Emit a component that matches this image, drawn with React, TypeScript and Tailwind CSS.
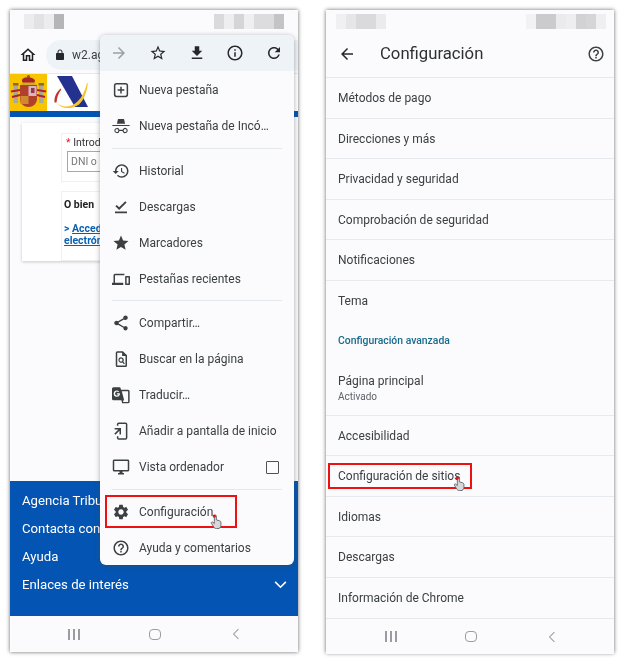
import type { ReactNode } from "react";

const textFont = "font-['Roboto',sans-serif]";

function MdIcon({ d, className = "w-[18px] h-[18px] shrink-0 text-[#3c4043]" }: { d: string; className?: string }) {
    return (
        <svg viewBox="0 0 24 24" className={className} fill="currentColor" fillRule="evenodd">
            <path d={d} />
        </svg>
    );
}

const paths = {
    home: "M12 5.69l5 4.5V18h-2v-6H9v6H7v-7.81l5-4.5M12 3L2 12h3v8h6v-6h2v6h6v-8h3L12 3z",
    lock: "M18 8h-1V6c0-2.76-2.24-5-5-5S7 3.24 7 6v2H6c-1.1 0-2 .9-2 2v10c0 1.1.9 2 2 2h12c1.1 0 2-.9 2-2V10c0-1.1-.9-2-2-2zM9 6c0-1.66 1.34-3 3-3s3 1.34 3 3v2H9V6z",
    forward: "M12 4l-1.41 1.41L16.17 11H4v2h12.17l-5.58 5.59L12 20l8-8z",
    back: "M20 11H7.83l5.59-5.59L12 4l-8 8 8 8 1.41-1.41L7.83 13H20v-2z",
    starBorder: "M22 9.24l-7.19-.62L12 2 9.19 8.63 2 9.24l5.46 4.73L5.82 21 12 17.27 18.18 21l-1.63-7.03L22 9.24zM12 15.4l-3.76 2.27 1-4.28-3.32-2.88 4.38-.38L12 6.1l1.71 4.04 4.38.38-3.32 2.88 1 4.28L12 15.4z",
    download: "M19 9h-4V3H9v6H5l7 7 7-7zM5 18v2h14v-2H5z",
    info: "M11 7h2v2h-2zm0 4h2v6h-2zm1-9C6.48 2 2 6.48 2 12s4.48 10 10 10 10-4.48 10-10S17.52 2 12 2zm0 18c-4.41 0-8-3.59-8-8s3.59-8 8-8 8 3.59 8 8-3.59 8-8 8z",
    refresh: "M17.65 6.35C16.2 4.9 14.21 4 12 4c-4.42 0-7.99 3.58-7.99 8s3.57 8 7.99 8c3.73 0 6.84-2.55 7.73-6h-2.08c-.82 2.33-3.04 4-5.65 4-3.31 0-6-2.69-6-6s2.69-6 6-6c1.66 0 3.14.69 4.22 1.78L13 11h7V4l-2.35 2.35z",
    newTab: "M6 2.500h12A3.500 3.500 0 0 1 21.500 6v12a3.500 3.500 0 0 1-3.500 3.500H6A3.500 3.500 0 0 1 2.500 18V6A3.500 3.500 0 0 1 6 2.500zm0 2A1.500 1.500 0 0 0 4.500 6v12A1.500 1.500 0 0 0 6 19.500h12a1.500 1.500 0 0 0 1.500-1.500V6A1.500 1.500 0 0 0 18 4.500H6zm5 3h2V11h3.500v2H13v3.500h-2V13H7.500v-2H11V7.500z",
    incognito: "M8 2.500h8L17.500 9h-11L8 2.500zM0.500 10.500h23V12H.5v-1.500zM6.500 14.500a3.500 3.500 0 0 1 3.400 2.500h4.200a3.500 3.500 0 1 1-.1 1.600h-4a3.500 3.500 0 1 1-3.500-4.100zm0 1.500a2 2 0 1 0 0 4 2 2 0 0 0 0-4zm11 0a2 2 0 1 0 0 4 2 2 0 0 0 0-4z",
    history: "M13 3c-4.97 0-9 4.03-9 9H1l3.890 3.890.07.14L9 12H6c0-3.870 3.130-7 7-7s7 3.130 7 7-3.130 7-7 7c-1.930 0-3.680-.79-4.940-2.060l-1.420 1.420C8.270 19.990 10.510 21 13 21c4.970 0 9-4.030 9-9s-4.030-9-9-9zm-1 5v5l4.280 2.540.72-1.210-3.500-2.080V8H12z",
    downloadDone: "M4 18h16v2.200H4zM9.500 16 4.500 11l1.800-1.800 3.200 3.200 8.200-8.200L19.500 6z",
    star: "M12 17.270L18.180 21l-1.640-7.030L22 9.240l-7.190-.61L12 2 9.190 8.630 2 9.240l5.460 4.730L5.820 21z",
    devices: "M4 5h12.500v2H4v10h11v3H0v-3h2V7a2 2 0 0 1 2-2zm14.500 3H23a1 1 0 0 1 1 1v10a1 1 0 0 1-1 1h-4.500a1 1 0 0 1-1-1V9a1 1 0 0 1 1-1zm1 2v8H22v-8h-2.500z",
    share: "M18 16.080c-.76 0-1.440.3-1.960.77L8.910 12.700c.05-.23.09-.46.09-.7s-.04-.47-.09-.7l7.050-4.110c.54.5 1.250.81 2.040.81 1.660 0 3-1.340 3-3s-1.340-3-3-3-3 1.340-3 3c0 .24.04.47.09.7L8.040 9.810C7.500 9.310 6.790 9 6 9c-1.660 0-3 1.340-3 3s1.340 3 3 3c.79 0 1.500-.31 2.040-.81l7.120 4.160c-.05.21-.08.43-.08.65 0 1.610 1.310 2.920 2.920 2.920 1.610 0 2.920-1.310 2.920-2.920s-1.310-2.920-2.920-2.920z",
    findPage: "M7 1.500h7.500L20 7v13.500a2 2 0 0 1-2 2H7a2 2 0 0 1-2-2v-17a2 2 0 0 1 2-2zm0 2v17h11V8h-4.500V3.500H7zm5 6a3.800 3.800 0 0 1 3.100 6l2.100 2.100-1.300 1.300-2.100-2.100a3.800 3.800 0 1 1-1.800-7.300zm0 1.800a2 2 0 1 0 0 4 2 2 0 0 0 0-4z",
    translate: "M2 1.500h9l1 3.500h9.500a2 2 0 0 1 2 2v14a2 2 0 0 1-2 2h-8l-1-4H2a2 2 0 0 1-2-2V3.500a2 2 0 0 1 2-2zM13 7l3 11-1.500 3.200h7V7H13zM6.500 6A4.200 4.200 0 1 0 10.600 11V9.800H6.500v1.600h2.300A2.500 2.500 0 1 1 8.200 8.200l1.200-1.100A4.200 4.200 0 0 0 6.500 6z",
    addHome: "M9 .5h9a2.500 2.500 0 0 1 2.500 2.500v18a2.500 2.500 0 0 1-2.500 2.500H9A2.500 2.500 0 0 1 6.500 21v-2h2v2.500h10v-19h-10V5h-2V3A2.500 2.500 0 0 1 9 .5zM3.500 8H12v8.500h-2v-5L4.500 17 3 15.500 8.500 10h-5V8z",
    monitor: "M21 2H3c-1.100 0-2 .9-2 2v12c0 1.100.9 2 2 2h7v2H8v2h8v-2h-2v-2h7c1.100 0 2-.9 2-2V4c0-1.100-.9-2-2-2zm0 14H3V4h18v12z",
    settings: "M19.140 12.940c.04-.3.06-.61.06-.94 0-.32-.02-.64-.07-.94l2.030-1.580c.18-.14.23-.41.12-.61l-1.920-3.320c-.12-.22-.37-.29-.59-.22l-2.390.96c-.5-.38-1.030-.7-1.620-.94l-.36-2.540c-.04-.24-.24-.41-.48-.41h-3.840c-.24 0-.43.17-.47.41l-.36 2.540c-.59.24-1.130.57-1.620.94l-2.390-.96c-.22-.08-.47 0-.59.22L2.740 8.870c-.12.21-.08.47.12.61l2.030 1.580c-.05.3-.09.63-.09.94s.02.64.07.94l-2.030 1.580c-.18.14-.23.41-.12.61l1.920 3.320c.12.22.37.29.59.22l2.390-.96c.5.38 1.030.7 1.620.94l.36 2.540c.05.24.24.41.48.41h3.840c.24 0 .44-.17.47-.41l.36-2.540c.59-.24 1.130-.56 1.620-.94l2.390.96c.22.08.47 0 .59-.22l1.920-3.320c.12-.22.07-.47-.12-.61l-2.010-1.580zM12 15.600c-1.980 0-3.600-1.620-3.600-3.600s1.620-3.600 3.600-3.600 3.600 1.620 3.600 3.600-1.620 3.600-3.600 3.600z",
    help: "M11 18h2v-2h-2v2zm1-16C6.480 2 2 6.480 2 12s4.480 10 10 10 10-4.480 10-10S17.520 2 12 2zm0 18c-4.410 0-8-3.590-8-8s3.590-8 8-8 8 3.590 8 8-3.590 8-8 8zm0-14c-2.210 0-4 1.790-4 4h2c0-1.100.9-2 2-2s2 .9 2 2c0 2-3 1.750-3 5h2c0-2.250 3-2.500 3-5 0-2.210-1.790-4-4-4z",
};

function Blur({ shades }: { shades: string[] }) {
    return (
        <div className="flex h-[15px]">
            {shades.map((shade, i) => (
                <div key={i} className="w-[10px] h-full" style={{ background: shade }} />
            ))}
        </div>
    );
}

function NavBar({ className }: { className: string }) {
    return (
        <div className={`h-[36px] shrink-0 flex items-center justify-between bg-[#fbfbfe] ${className}`}>
            <div className="flex gap-[3.500px]">
                <div className="w-[1.500px] h-[11px] bg-[#9a9ca1]" />
                <div className="w-[1.500px] h-[11px] bg-[#9a9ca1]" />
                <div className="w-[1.500px] h-[11px] bg-[#9a9ca1]" />
            </div>
            <div className="w-[12px] h-[11px] -translate-x-px rounded-[4px] border-[1.500px] border-[#9a9ca1]" />
            <svg viewBox="0 0 10 14" className="w-[8px] h-[12px]" fill="none" stroke="#9a9ca1" strokeWidth="1.300">
                <path d="M8 1 2 7l6 6" />
            </svg>
        </div>
    );
}

function Hand({ className }: { className: string }) {
    return (
        <svg viewBox="0 0 14 18" className={className}>
            <path d="M5 9V2.500a1.200 1.200 0 0 1 2.400 0V7l4 1.200c1 .3 1.500 1 1.500 2V14c0 2-1.500 3.500-3.500 3.500H7.500c-1.500 0-2.500-.7-3.300-2L1.500 11c-.6-1 .8-2 1.700-1.200L5 11.500z" fill="#d8d8dc" stroke="#55585c" strokeWidth="1" />
            <circle cx="5" cy="2.500" r="2" fill="#e0171c" />
        </svg>
    );
}

function CoatOfArms() {
    return (
        <div className="w-[37px] h-[37px] bg-[#f8c400]">
            <svg viewBox="0 0 37 37" className="w-[37px] h-[37px]">
                <rect x="3.500" y="11" width="4.500" height="18" fill="#a9a99a" />
                <rect x="29" y="11" width="4.500" height="18" fill="#a9a99a" />
                <rect x="3" y="9" width="5.500" height="2.500" fill="#8d6a22" />
                <rect x="28.500" y="9" width="5.500" height="2.500" fill="#8d6a22" />
                <path d="M1 17.500 10 16M27 16l9 1.500M2 23l8-2M27 21l8 2" stroke="#b3202a" strokeWidth="2.200" />
                <path d="M10 11h17v14.500a8.500 7.500 0 0 1-17 0z" fill="#b0402c" />
                <rect x="18.500" y="12" width="8" height="10" fill="#d9b4c0" />
                <rect x="21" y="14" width="3.500" height="5" fill="#8e3a4a" />
                <rect x="10.500" y="22" width="8" height="8" fill="#cf8a2e" />
                <path d="M12 7c-1-5 12-5 13 0l-1 2.500H13z" fill="#a8242a" />
                <rect x="11.500" y="8.500" width="14" height="2.500" fill="#d9a91f" />
                <circle cx="18.500" cy="2.500" r="1.500" fill="#7c5a1c" />
            </svg>
        </div>
    );
}

function AeatLogo() {
    return (
        <svg viewBox="0 0 40 37" className="w-[40px] h-[37px] ml-[3px]">
            <path d="M7 2h15l16 31H25z" fill="#25318f" />
            <path d="M4.500 28.500C4 23 6.500 18 10.500 14.500l.8 1C8.500 19 7 23 6.500 28.500z" fill="#c8332b" />
            <path d="M7 29c5 5 14 5 21-2 4-4 7-10 9-18l.8.3C37 18 34 26 29 30.500 21 36 11 35 7 29z" fill="#f3c331" />
        </svg>
    );
}

const menuGroups: { icon: string; label: string; check?: boolean }[][] = [
    [
        { icon: paths.newTab, label: "Nueva pestaña" },
        { icon: paths.incognito, label: "Nueva pestaña de Incó…" },
    ],
    [
        { icon: paths.history, label: "Historial" },
        { icon: paths.downloadDone, label: "Descargas" },
        { icon: paths.star, label: "Marcadores" },
        { icon: paths.devices, label: "Pestañas recientes" },
    ],
    [
        { icon: paths.share, label: "Compartir…" },
        { icon: paths.findPage, label: "Buscar en la página" },
        { icon: paths.translate, label: "Traducir…" },
        { icon: paths.addHome, label: "Añadir a pantalla de inicio" },
        { icon: paths.monitor, label: "Vista ordenador", check: true },
    ],
    [
        { icon: paths.settings, label: "Configuración" },
        { icon: paths.help, label: "Ayuda y comentarios" },
    ],
];

function ChromeMenu() {
    return (
        <div className="absolute top-[25px] left-[90px] w-[194px] h-[530px] rounded-[6px] bg-[#fbfbfe] shadow-[0_1px_5px_rgba(60,64,67,0.45)] overflow-hidden">
            <div className="h-[36px] mb-px bg-[#eef3f8] flex items-center justify-between pl-[10px] pr-[11px]">
                <MdIcon d={paths.forward} className="w-[18px] h-[18px] text-[#9aa0a6]" />
                <MdIcon d={paths.starBorder} className="w-[18px] h-[18px] text-[#26282b]" />
                <MdIcon d={paths.download} className="w-[18px] h-[18px] text-[#26282b]" />
                <MdIcon d={paths.info} className="w-[18px] h-[18px] text-[#26282b]" />
                <MdIcon d={paths.refresh} className="w-[18px] h-[18px] text-[#26282b]" />
            </div>
            {menuGroups.map((group, g) => (
                <div key={g}>
                    {g > 0 && <div className="h-px mx-[12px] my-[3.750px] bg-[#e3e8ee]" />}
                    {group.map((item) => (
                        <div key={item.label} className="h-[36px] flex items-center pl-[12px] pr-[15px]">
                            <MdIcon d={item.icon} />
                            <span className="ml-[9px] flex-1 text-[12px] whitespace-nowrap text-[#3c4043]">{item.label}</span>
                            {item.check && <div className="w-[13px] h-[13px] rounded-[1px] border-[1.500px] border-[#4d5156]" />}
                        </div>
                    ))}
                </div>
            ))}
        </div>
    );
}

function ContentBox({ className, children }: { className: string; children: ReactNode }) {
    return <div className={`ml-[39px] border border-[#eef0f2] pl-[3px] ${className}`}>{children}</div>;
}

function LeftPhone() {
    return (
        <div className={`relative w-[288px] h-[642px] flex flex-col bg-[#fbfbfe] shadow-[0_0_4px_rgba(0,0,0,0.6)] ${textFont}`}>
            <div className="h-[26px] shrink-0 flex justify-between pt-[4px] pl-[14px] pr-[14px]">
                <Blur shades={["#ececee", "#e2e2e5", "#ececee", "#b5b5b8"]} />
                <Blur shades={["#dadadd", "#eeeef0", "#d5d5d8", "#efeff1", "#dcdcdf", "#dcdcdf", "#c4c4c7"]} />
            </div>
            <div className="h-[38px] shrink-0 flex items-center border-b border-[#e6e9ee] pl-[9px]">
                <MdIcon d={paths.home} className="w-[18px] h-[18px] text-[#1d1f22]" />
                <div className="ml-[9px] flex-1 h-[30px] rounded-l-full bg-[#eef3f8] flex items-center pl-[8px]">
                    <MdIcon d={paths.lock} className="w-[12px] h-[12px] text-[#26282b]" />
                    <span className="ml-[6px] text-[12px] text-[#3c4043]">w2.ag</span>
                </div>
            </div>
            <div className="h-[37px] shrink-0 flex bg-white">
                <CoatOfArms />
                <AeatLogo />
            </div>
            <div className="h-[6px] shrink-0 bg-[#0455b3]" />
            <div className="flex-1 pt-[6px] pl-[12px] pr-[10px]">
                <div className="h-[138px] bg-white shadow-[0_1px_3px_rgba(0,0,0,0.2)] pt-[10px] text-[10.500px]">
                    <ContentBox className="h-[49px]">
                        <div className="pl-[1px] pt-[2px] leading-[14px] text-[#333]"><span className="text-[#d0202a]">*</span> Introd</div>
                        <div className="mt-[1px] ml-[2px] w-[200px] h-[21px] border border-[#a8a8a8] pl-[3px] leading-[19px] text-[#777]">DNI o</div>
                    </ContentBox>
                    <ContentBox className="mt-[9px] h-[70px]">
                        <div className="pt-[5px] -ml-px font-bold text-[#222]">O bien</div>
                        <div className="mt-[10px] -ml-px font-bold leading-[12.500px] text-[#0b62b0] whitespace-nowrap">
                            &gt; <span className="underline">Acceder</span>
                            <br />
                            <span className="underline">electrónico</span>
                        </div>
                    </ContentBox>
                </div>
            </div>
            <div className="h-[135px] shrink-0 bg-[#0455b3] pl-[12px] pr-[11px] pt-[6px] text-[13.200px] text-white">
                <div className="h-[28px] leading-[28px]">Agencia Tributaria</div>
                <div className="h-[28px] leading-[28px]">Contacta con nosotros</div>
                <div className="h-[28px] leading-[28px]">Ayuda</div>
                <div className="h-[28px] flex items-center justify-between">
                    Enlaces de interés
                    <svg viewBox="0 0 14 9" className="w-[13px] h-[8px]" fill="none" stroke="white" strokeWidth="1.800">
                        <path d="m1 1 6 6 6-6" />
                    </svg>
                </div>
            </div>
            <NavBar className="pl-[58px] pr-[58px]" />
            <ChromeMenu />
            <div className="absolute top-[485px] left-[95px] w-[132px] h-[33px] border-2 border-[#ee1111]" />
            <Hand className="absolute top-[504px] left-[200px] w-[12px] h-[15px]" />
        </div>
    );
}

function SettingRow({ label, sub, last }: { label: string; sub?: string; last?: boolean }) {
    return (
        <div className={`flex flex-col justify-center pl-[12px] pt-px border-[#e6e9ee] ${sub ? "h-[55px]" : "h-[40.500px]"} ${last ? "" : "border-b"}`}>
            <div className="text-[12px] leading-[16px] text-[#3c4043]">{label}</div>
            {sub && <div className="text-[10px] leading-[14px] mt-[1px] text-[#5f6368]">{sub}</div>}
        </div>
    );
}

function RightPhone() {
    const firstRows = ["Métodos de pago", "Direcciones y más", "Privacidad y seguridad", "Comprobación de seguridad", "Notificaciones"];
    const lastRows = ["Accesibilidad", "Configuración de sitios", "Idiomas", "Descargas"];
    return (
        <div className={`relative w-[288px] h-[643px] flex flex-col bg-[#fbfbfe] shadow-[0_0_4px_rgba(0,0,0,0.6)] ${textFont}`}>
            <div className="h-[20px] shrink-0 flex justify-between pt-[4px] pl-[10px] pr-[8px]">
                <Blur shades={["#f0f0f2", "#e6e6e9", "#dadadd", "#dadadd", "#ebebed"]} />
                <Blur shades={["#f2f2f4", "#cbcbce", "#cbcbce", "#ebebed", "#eeeef0", "#d2d2d5", "#d5d5d8", "#efeff1"]} />
            </div>
            <div className="h-[48px] shrink-0 flex items-center border-b border-[#e6e9ee] pl-[12px] pr-[9px]">
                <MdIcon d={paths.back} className="w-[18px] h-[18px] text-[#26282b]" />
                <div className="ml-[24px] flex-1 text-[16.700px] text-[#2e3033]">Configuración</div>
                <MdIcon d={paths.help} className="w-[18px] h-[18px] text-[#3c4043]" />
            </div>
            <div className="flex-1">
                {firstRows.map((row) => (
                    <SettingRow key={row} label={row} />
                ))}
                <SettingRow label="Tema" last />
                <div className="h-[39.500px] flex items-center pl-[12px] text-[10.400px] font-medium text-[#176a8c]">Configuración avanzada</div>
                <SettingRow label="Página principal" sub="Activado" />
                {lastRows.map((row) => (
                    <SettingRow key={row} label={row} />
                ))}
                <SettingRow label="Información de Chrome" last />
            </div>
            <NavBar className="pl-[59px] pr-[58px] border-t border-[#e6e9ee]" />
            <div className="absolute top-[453px] left-[2px] w-[144px] h-[26px] border-2 border-[#ee1111]" />
            <Hand className="absolute top-[466px] left-[127px] w-[12px] h-[15px]" />
        </div>
    );
}

export default function App() {
    return (
        <div className="w-[621px] h-[661px] bg-white overflow-hidden flex gap-[28px] pl-[10px] pt-[10px] blur-[0.35px]">
            <LeftPhone />
            <RightPhone />
        </div>
    );
}
